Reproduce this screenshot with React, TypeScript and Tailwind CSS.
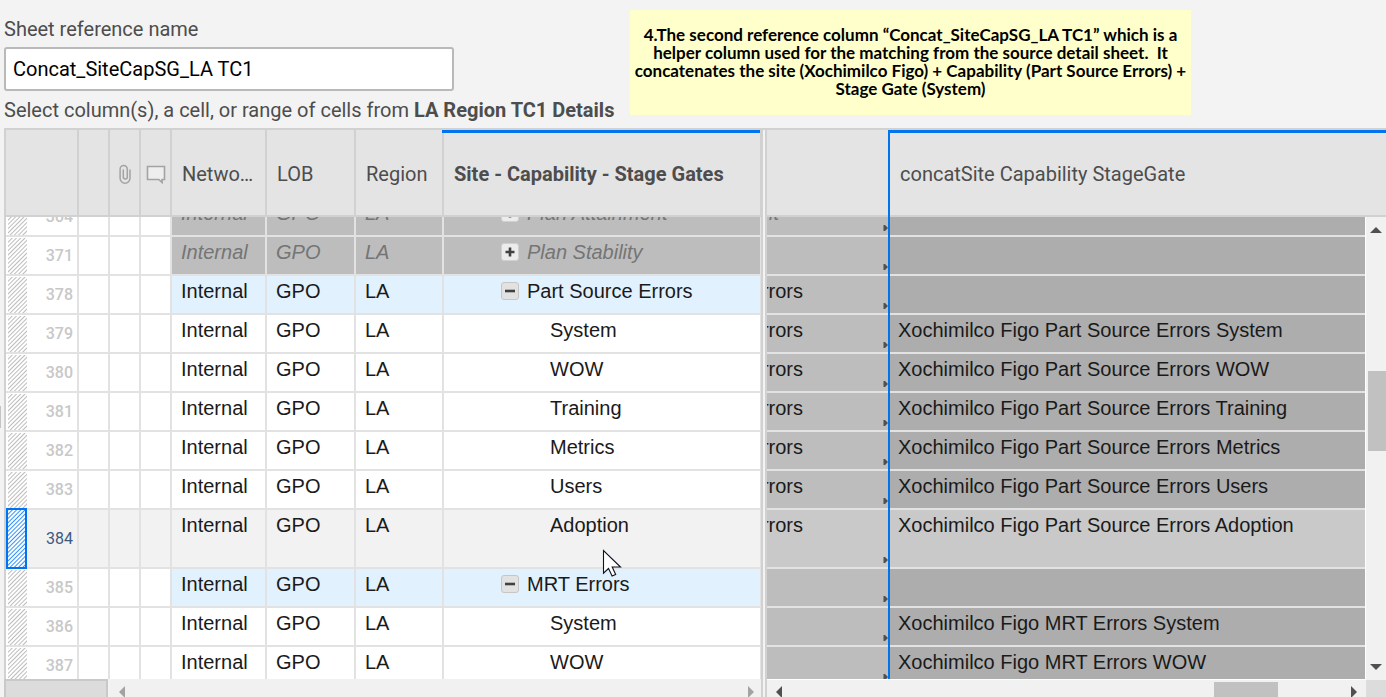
import clsx from "clsx";

type Row = {
  id: number;
  label: string;
  kind: "muted" | "parent" | "child";
  prev?: string;
  concat?: string;
  clipped?: boolean;
  active?: boolean;
};

const rows: Row[] = [
  { id: 364, label: "Plan Attainment", kind: "muted", prev: "nt", clipped: true },
  { id: 371, label: "Plan Stability", kind: "muted" },
  { id: 378, label: "Part Source Errors", kind: "parent", prev: "rrors" },
  { id: 379, label: "System", kind: "child", prev: "rrors", concat: "Xochimilco Figo Part Source Errors System" },
  { id: 380, label: "WOW", kind: "child", prev: "rrors", concat: "Xochimilco Figo Part Source Errors WOW" },
  { id: 381, label: "Training", kind: "child", prev: "rrors", concat: "Xochimilco Figo Part Source Errors Training" },
  { id: 382, label: "Metrics", kind: "child", prev: "rrors", concat: "Xochimilco Figo Part Source Errors Metrics" },
  { id: 383, label: "Users", kind: "child", prev: "rrors", concat: "Xochimilco Figo Part Source Errors Users" },
  { id: 384, label: "Adoption", kind: "child", prev: "rrors", concat: "Xochimilco Figo Part Source Errors Adoption", active: true },
  { id: 385, label: "MRT Errors", kind: "parent" },
  { id: 386, label: "System", kind: "child", concat: "Xochimilco Figo MRT Errors System" },
  { id: 387, label: "WOW", kind: "child", concat: "Xochimilco Figo MRT Errors WOW" },
];

const th = "relative h-[87px] border-b-2 border-[#d1d1d1] bg-[#e4e4e4] p-0 pt-[2px] text-left font-normal";
const td = "border-b-2 border-[#e2e2e2] p-0 align-top";

// keeps every row at its height; the first one is scrolled half under the header
function Cell({ row, className, children }: { row: Row; className?: string; children?: React.ReactNode }) {
  return (
    <div className={clsx("flex flex-col justify-end", row.clipped ? "h-[18px] overflow-hidden" : row.active ? "h-[57px]" : "h-[37px]")}>
      <div className={clsx("relative shrink-0 leading-7 whitespace-nowrap", row.active ? "h-[57px]" : "h-[37px]", className)}>
        {children}
      </div>
    </div>
  );
}

function PaperclipIcon() {
  return (
    <svg className="mx-auto block" width="12" height="20" viewBox="0 0 12 20" fill="none" stroke="#a3a3a3" strokeWidth="1.5" strokeLinecap="round">
      <path d="M11 6v8.2a4.9 4.9 0 0 1-9.9 0V5a3.6 3.6 0 0 1 7.2 0v8a2 2 0 0 1-4 0V6" />
    </svg>
  );
}

function CommentIcon() {
  return (
    <svg className="mx-auto block" width="20" height="20" viewBox="0 0 20 20" fill="#eeeeee" stroke="#a3a3a3" strokeWidth="1.6">
      <path d="M1.5 2.5h17v13h-2.4v3l-3.3-3H1.5z" />
    </svg>
  );
}

function Toggle({ open }: { open: boolean }) {
  return (
    <button
      type="button"
      aria-label={open ? "Collapse" : "Expand"}
      className={clsx("flex h-[18px] w-[18px] shrink-0 items-center justify-center rounded-[3px] border", open ? "border-[#c6c6c6] bg-[#e2e2e2]" : "border-[#d0d0d0] bg-[#ececec]")}
    >
      <svg width="10" height="10" viewBox="0 0 10 10" stroke="#404040" strokeWidth="2.6">
        <path d={open ? "M0 5h10" : "M0.5 5h9M5 0.5v9"} />
      </svg>
    </button>
  );
}

function Arrow({ dir, className }: { dir: "up" | "down" | "left" | "right"; className?: string }) {
  const paths = {
    up: "M0 9 6 3l6 6z",
    down: "M0 3h12L6 9z",
    left: "M9 0v12L3 6z",
    right: "M3 0v12l6-6z",
  };
  return (
    <button type="button" aria-label={`Scroll ${dir}`} className="flex h-5 w-5 shrink-0 items-center justify-center">
      <svg className={clsx("block", className)} width="12" height="12" viewBox="0 0 12 12" fill="currentColor">
        <path d={paths[dir]} />
      </svg>
    </button>
  );
}

function FrozenPane() {
  return (
    <div className="flex w-[757px] shrink-0 flex-col">
      <div className="min-h-0 flex-1 overflow-hidden border-l-2 border-[#d1d1d1]">
        <table className="w-[755px] table-fixed border-separate border-spacing-0 bg-white">
          <colgroup>
            <col className="w-[73px]" />
            <col className="w-[31px]" />
            <col className="w-[31px]" />
            <col className="w-[31px]" />
            <col className="w-[95px]" />
            <col className="w-[89px]" />
            <col className="w-[88px]" />
            <col className="w-[317px]" />
          </colgroup>
          <thead>
            <tr className="font-[Roboto,sans-serif] text-[#4d4d4d]">
              <th className={clsx(th, "border-r-2")} aria-label="Row"></th>
              <th className={clsx(th, "border-r-2")} aria-label="Status"></th>
              <th className={clsx(th, "border-r-2")} aria-label="Attachments">
                <PaperclipIcon />
              </th>
              <th className={clsx(th, "border-r-2")} aria-label="Comments">
                <CommentIcon />
              </th>
              <th className={clsx(th, "border-r-2 pl-[10px]")}>Netwo…</th>
              <th className={clsx(th, "border-r-2 pl-[10px]")}>LOB</th>
              <th className={clsx(th, "border-r-2 pl-[10px]")}>Region</th>
              <th className={clsx(th, "border-r pl-[10px]")}>
                <div className="absolute top-0 right-0 -left-[2px] h-[3px] bg-[#0073ee]"></div>
                <span className="font-bold">Site - Capability - Stage Gates</span>
              </th>
            </tr>
          </thead>
          <tbody>
            {rows.map((row) => {
              const fill = clsx(
                td,
                row.kind === "muted" && "bg-[#bdbdbd] text-[#757575] italic",
                row.kind === "parent" && "bg-[#e1f1fe]",
                row.active && "bg-[#f2f2f2]"
              );
              const side = clsx(td, "border-r-2", row.active && "bg-[#f2f2f2]");
              return (
                <tr key={row.id}>
                  <td className={side}>
                    <Cell row={row} className={clsx("flex items-center pt-px pr-1 font-[Roboto,sans-serif] text-base", row.active ? "text-[#3c5a80]" : "pl-[2px] font-medium text-[#c8c8c8]")}>
                      {row.active ? (
                        <span className="absolute -top-[2px] -bottom-[2px] left-0 w-[21px] border-2 border-[#0073ee] bg-white bg-[repeating-linear-gradient(135deg,#2f92ff_0px,#ffffff_1px,#ffffff_2px,#2f92ff_3px)]"></span>
                      ) : (
                        <span className="h-full w-[19px] bg-[repeating-linear-gradient(135deg,#bcbcbc_0px,#ffffff_1px,#ffffff_2px,#bcbcbc_3px)]"></span>
                      )}
                      <span className="ml-auto">{row.id}</span>
                    </Cell>
                  </td>
                  <td className={side}></td>
                  <td className={side}></td>
                  <td className={side}></td>
                  <td className={clsx(fill, "border-r-2")}>
                    <Cell row={row} className="pt-px pl-[9px]">Internal</Cell>
                  </td>
                  <td className={clsx(fill, "border-r-2")}>
                    <Cell row={row} className="pt-px pl-[9px]">GPO</Cell>
                  </td>
                  <td className={clsx(fill, "border-r-2")}>
                    <Cell row={row} className="pt-px pl-[9px]">LA</Cell>
                  </td>
                  <td className={clsx(fill, "border-r")}>
                    {row.kind === "child" ? (
                      <Cell row={row} className="pt-px pl-[106px]">{row.label}</Cell>
                    ) : (
                      <Cell row={row} className="pt-px pl-[57px]">
                        <div className="flex items-center gap-2">
                          <Toggle open={row.kind === "parent"} />
                          {row.label}
                        </div>
                      </Cell>
                    )}
                  </td>
                </tr>
              );
            })}
          </tbody>
        </table>
      </div>
      <div className="flex h-[18px] shrink-0 overflow-hidden">
        <div className="w-[104px] shrink-0 border-2 border-b-0 border-[#c9c9c9] bg-[#dcdcdc]"></div>
        <div className="ml-[2px] flex flex-1 justify-between bg-[#f1f1f1] pt-[3px] pl-[2px]">
          <Arrow dir="left" className="text-[#a3a3a3]" />
          <Arrow dir="right" className="text-[#a3a3a3]" />
        </div>
      </div>
    </div>
  );
}

// left edge of the selected column, unbroken across the row lines
function SelectionEdge() {
  return <div className="absolute top-0 right-0 -bottom-[2px] w-[2px] bg-[#0073ee]"></div>;
}

function ScrollPane() {
  return (
    <div className="relative flex min-w-0 flex-1 flex-col">
      <div className="min-h-0 flex-1 overflow-hidden">
        <table className="w-full table-fixed border-separate border-spacing-0">
          <colgroup>
            <col className="w-[123px]" />
            <col />
          </colgroup>
          <thead>
            <tr className="font-[Roboto,sans-serif] text-[#4d4d4d]">
              <th className={th} aria-label="Key">
                <SelectionEdge />
              </th>
              <th className={clsx(th, "pl-[10px]")}>
                <div className="absolute top-0 right-0 left-0 h-[3px] bg-[#0073ee]"></div>
                concatSite Capability StageGate
              </th>
            </tr>
          </thead>
          <tbody>
            {rows.map((row) => (
              <tr key={row.id}>
                <td className={clsx(td, "relative", row.active ? "bg-[#c9c9c9]" : "bg-[#bdbdbd]")}>
                  <Cell row={row} className="pt-px">
                    <span className={clsx("flex justify-end overflow-hidden", row.kind === "muted" ? "w-3 text-[#757575] italic" : "w-9")}>{row.prev}</span>
                    <svg className="absolute right-[2px] bottom-1" width="5" height="6" viewBox="0 0 5 6" fill="#505050">
                      <path d="M0.5 0h1.5l3 3-3 3H0.5z" />
                    </svg>
                  </Cell>
                  <SelectionEdge />
                </td>
                <td className={clsx(td, row.active ? "bg-[#c9c9c9]" : "bg-[#adadad]")}>
                  <Cell row={row} className="pt-px pl-2">{row.concat}</Cell>
                </td>
              </tr>
            ))}
          </tbody>
        </table>
      </div>
      <div className="flex h-[18px] shrink-0 overflow-hidden border-t border-white">
        <div className="flex flex-1 bg-[#f1f1f1] px-[2px] pt-[2px]">
          <Arrow dir="left" className="text-[#505050]" />
          <div className="flex flex-1 justify-end pr-[66px]">
            <div className="h-5 w-16 bg-[#c1c1c1]"></div>
          </div>
          <Arrow dir="right" className="text-[#505050]" />
        </div>
        <div className="w-5 bg-[#dcdcdc]"></div>
      </div>
      {/* vertical scrollbar floats over the rows, below the header */}
      <div className="absolute top-[87px] right-0 bottom-[17px] flex w-[21px] flex-col items-end border-l border-white bg-[#f1f1f1] py-[3px]">
        <Arrow dir="up" className="text-[#505050]" />
        <div className="flex-[131]"></div>
        <div className="h-20 w-[18px] bg-[#c1c1c1]"></div>
        <div className="flex-[206]"></div>
        <Arrow dir="down" className="text-[#505050]" />
      </div>
    </div>
  );
}

export default function App() {
  return (
    <div className="relative flex h-screen flex-col overflow-hidden bg-[#f3f3f3] pl-1 font-['Liberation_Sans',Arial,sans-serif] text-xl text-[#1a1a1a]">
      <div className="flex h-32 shrink-0 items-start">
        <div className="w-[626px] shrink-0 pt-4 font-[Roboto,sans-serif] leading-[26px] text-[#4d4d4d]">
          <label htmlFor="ref-name" className="block">Sheet reference name</label>
          <input
            id="ref-name"
            type="text"
            defaultValue="Concat_SiteCapSG_LA TC1"
            className="mt-[5px] block h-11 w-[450px] rounded-[3px] border-2 border-[#b9b9b9] bg-white px-[7px] text-black outline-none"
          />
          <p className="mt-[6px] whitespace-nowrap">
            Select column(s), a cell, or range of cells from <b>LA Region TC1 Details</b>
          </p>
        </div>
        <p className="mt-[10px] w-[561px] shrink-0 bg-[#ffffcb] pt-4 pb-[17px] text-center font-[Lato,sans-serif] text-[17px] leading-[18px] font-bold whitespace-pre text-black">
          {"4.The second reference column “Concat_SiteCapSG_LA TC1” which is a\nhelper column used for the matching from the source detail sheet.  It\nconcatenates the site (Xochimilco Figo) + Capability (Part Source Errors) +\nStage Gate (System)"}
        </p>
      </div>

      <div className="flex min-h-0 flex-1 border-t-2 border-[#d1d1d1]">
        <FrozenPane />
        <div className="w-[6px] shrink-0 border-x-2 border-[#d1d1d1] bg-[#f3f3f3]"></div>
        <ScrollPane />
      </div>

      {/* grip of the dialog's side panel */}
      <div className="absolute top-[406px] left-0 h-[22px] w-px bg-[#c4c4c4]"></div>

      {/* mouse pointer */}
      <svg className="absolute top-[549px] left-[602px]" width="20" height="29" viewBox="0 0 20 29" fill="#fff" stroke="#111122" strokeWidth="1.1">
        <path d="M1.5 1.5v22.7l5-4.7 3.6 7.6 3.6-1.7-3.5-7.4h8.3z" />
      </svg>
    </div>
  );
}
